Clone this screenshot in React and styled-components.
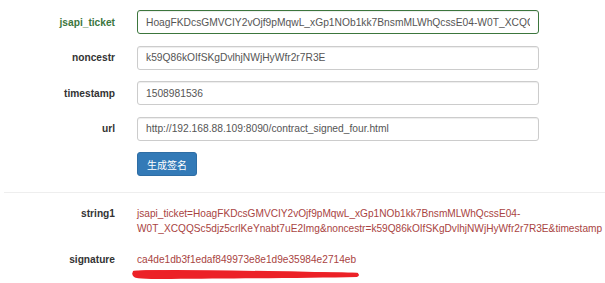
import styled, { createGlobalStyle } from 'styled-components';

const GlobalStyle = createGlobalStyle`
    html, body {
        margin: 0;
        padding: 0;
        background: #fff;
        overflow: hidden;
    }
    body {
        font-family: "Liberation Sans", Arial, "Noto Sans CJK SC", sans-serif;
        color: #333;
    }
`

const Page = styled.div`
    width: 605px;
    height: 283px;
    padding-top: 10px;
    box-sizing: border-box;
    overflow: hidden;
`

const Form = styled.div`
    display: flex;
    flex-direction: column;
    gap: 11.6px;
`

const Row = styled.div`
    display: grid;
    grid-template-columns: 137px 402px;
    align-items: center;
`

const Label = styled.label`
    text-align: right;
    padding-right: 22px;
    font-size: 10.2px;
    font-weight: bold;
    color: ${props => props.success ? '#3c763d' : '#333'};
`

const Input = styled.input`
    height: 24px;
    box-sizing: border-box;
    width: 100%;
    padding: 0 8px;
    border: 1px solid ${props => props.success ? '#3c763d' : '#ccc'};
    border-radius: 3px;
    box-shadow: inset 0 1px 1px rgba(0,0,0,.075);
    font-family: "Liberation Sans", Arial, sans-serif;
    font-size: 10.25px;
    color: #555;
    outline: none;
`

const Button = styled.button`
    grid-column: 2;
    justify-self: start;
    height: 24px;
    width: 60px;
    padding: 0;
    background: #337ab7;
    border: 1px solid #2e6da4;
    border-radius: 3px;
    color: #fff;
    font-family: "Noto Sans CJK SC", sans-serif;
    font-size: 10px;
`

const Divider = styled.hr`
    margin: 16px 0 0 4px;
    border: 0;
    border-top: 1px solid #eee;
`

const Results = styled.div`
    display: flex;
    flex-direction: column;
    gap: 16px;
    padding-top: 13px;
`

const ResultRow = styled.div`
    display: grid;
    grid-template-columns: 137px 1fr;
    align-items: start;
`

const ResultLabel = styled.div`
    text-align: right;
    padding-right: 22px;
    font-size: 10.2px;
    font-weight: bold;
    line-height: 15px;
`

const ResultValue = styled.div`
    position: relative;
    font-size: 10.15px;
    line-height: 15px;
    color: #a94442;
    white-space: nowrap;
`

const Scribble = styled.svg`
    position: absolute;
    left: -6px;
    top: 15px;
    overflow: visible;
`

const fields = [
    { name: 'jsapi_ticket', value: 'HoagFKDcsGMVCIY2vOjf9pMqwL_xGp1NOb1kk7BnsmMLWhQcssE04-W0T_XCQQSc5djz5crlKeYnabt7uE2Img', success: true },
    { name: 'noncestr', value: 'k59Q86kOIfSKgDvlhjNWjHyWfr2r7R3E' },
    { name: 'timestamp', value: '1508981536' },
    { name: 'url', value: 'http://192.168.88.109:8090/contract_signed_four.html' },
]

function App() {
    return (
        <Page>
            <GlobalStyle />
            <Form>
                {fields.map(f => (
                    <Row key={f.name}>
                        <Label success={f.success}>{f.name}</Label>
                        <Input success={f.success} defaultValue={f.value} readOnly />
                    </Row>
                ))}
                <Row>
                    <Button>生成签名</Button>
                </Row>
            </Form>
            <Divider />
            <Results>
                <ResultRow>
                    <ResultLabel>string1</ResultLabel>
                    <ResultValue>
                        jsapi_ticket=HoagFKDcsGMVCIY2vOjf9pMqwL_xGp1NOb1kk7BnsmMLWhQcssE04-<br />
                        W0T_XCQQSc5djz5crlKeYnabt7uE2Img&amp;noncestr=k59Q86kOIfSKgDvlhjNWjHyWfr2r7R3E&amp;timestamp
                    </ResultValue>
                </ResultRow>
                <ResultRow>
                    <ResultLabel>signature</ResultLabel>
                    <ResultValue>
                        ca4de1db3f1edaf849973e8e1d9e35984e2714eb
                        <Scribble width="232" height="14">
                            <path d="M2 5 C 10 2, 30 3.5, 60 4 C 120 4.5, 190 5, 226 6 Q 230 8, 226 10 C 180 11, 100 11.5, 40 12 C 20 12, 6 12, 3 10 Q 0 7, 2 5 Z" fill="#ec2127" />
                            <path d="M3 5 C 40 3, 120 5, 226 7" fill="none" stroke="#ec2127" strokeWidth="2.5" strokeLinecap="round" />
                        </Scribble>
                    </ResultValue>
                </ResultRow>
            </Results>
        </Page>
    );
}

export default App;
